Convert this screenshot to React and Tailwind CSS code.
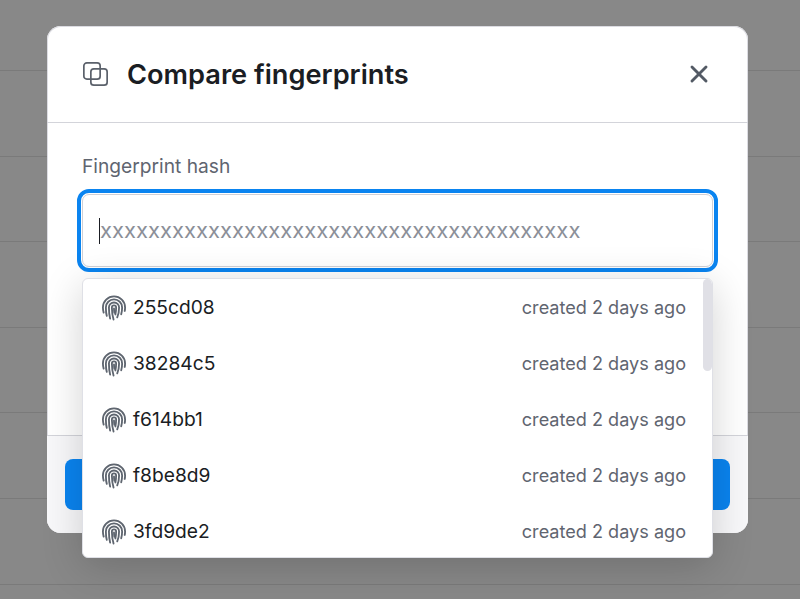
import React from 'react';
import { X } from 'lucide-react';

const FingerprintIcon = () => (
  <svg width="24" height="26" viewBox="0 0 26 28" fill="none" stroke="#5f6670" strokeWidth="2" strokeLinecap="round" className="shrink-0">
    <path d="M1.800 19C1.200 17 1 15 1 13.400 1 6.700 6.400 1.400 13 1.400s12 5.300 12 12c0 1.400-.1 2.600-.4 3.800" />
    <path d="M5.200 22.500C4.200 19.500 4.200 16 4.200 13.400 4.200 8.500 8.100 4.700 13 4.700s8.800 3.800 8.800 8.700c0 2.500-.3 5-1 7.500" />
    <path d="M8.800 25.500C7.800 21.500 7.500 17 7.500 13.400 7.500 10.400 10 8 13 8s5.500 2.400 5.500 5.400c0 3.600-.6 7.400-2 10.800" />
    <path d="M12.500 26.500c-1.200-4-1.800-9-1.800-13 0-1.300 1-2.300 2.300-2.300s2.300 1 2.300 2.300c0 2.500-.2 5-.8 7.500" />
    <path d="M13 14.500c0 1.500.1 3 .4 4.800" />
  </svg>
);

const keys = ['255cd08', '38284c5', 'f614bb1', 'f8be8d9', '3fd9de2'];

const CompareIcon = () => (
  <svg width="28" height="28" viewBox="0 0 28 28" fill="none" stroke="#5b616b" strokeWidth="1.7">
    <rect x="2.85" y="2.85" width="16.3" height="16.3" rx="3" />
    <rect x="9.85" y="8.85" width="16.3" height="16.3" rx="3" />
  </svg>
);

export default function App() {
  return (
    <div className="relative h-[599px] w-[800px] overflow-hidden bg-[#888888]" style={{ fontFamily: 'Inter, sans-serif' }}>
      {/* table rows behind the overlay */}
      <div className="h-[71px] border-b border-[#7a7a7a]" />
      {[0, 1, 2, 3, 4, 5].map((i) => (
        <div key={i} className="h-[85.6px] border-b border-[#7a7a7a]" />
      ))}

      <div className="absolute left-[47px] top-[26px] flex h-[507px] w-[701px] flex-col rounded-[14px] bg-white shadow-[inset_0_0_0_1px_#dcdce2]">
        <div className="flex h-[97px] items-center border-b border-[#d3d4da] pl-[34px] pr-[35px]">
          <CompareIcon />
          <h2 className="ml-[18px] mt-[2px] flex-1 text-[27.2px] font-semibold text-[#1a1d23]">Compare fingerprints</h2>
          <X size={28} strokeWidth={2.5} className="text-[#535a65]" />
        </div>
        <div className="flex-1 px-[30px] pt-[29px]">
          <label className="ml-[5px] block text-[19.2px] leading-[28px] text-[#5f6570]">Fingerprint hash</label>
          <div className="mt-[9px] rounded-xl border-4 border-[#0a84f0] p-px">
            <div className="flex h-[73px] items-center rounded-[7px] border border-[#cfd0d6] bg-white pl-[16px]">
              <div className="h-[26px] w-px bg-[#1a1d23]" />
              <span className="text-[22px] text-[#8b8f98]">xxxxxxxxxxxxxxxxxxxxxxxxxxxxxxxxxxxxxxxx</span>
            </div>
          </div>
        </div>
        <div className="h-[98px] rounded-b-[14px] border-t border-[#d3d4da] bg-[#f8f8fa] px-[18px] pt-[23px]">
          <div className="h-[51px] rounded-lg bg-[#0a84f0]" />
        </div>
      </div>

      {/* suggestions popover */}
      <div className="absolute left-[82px] top-[278px] h-[280px] w-[631px] overflow-hidden rounded-md border border-[#dfe0e6] bg-white shadow-[0_8px_40px_rgba(0,0,0,0.18)]">
        {keys.map((hash) => (
          <div key={hash} className="flex h-[56px] items-center pl-[19px] pr-[26px] pt-[1px]">
            <FingerprintIcon />
            <span className="ml-[7px] flex-1 text-[19.2px] text-[#1a1d23]">{hash}</span>
            <span className="text-[18.1px] text-[#5f6570]">created 2 days ago</span>
          </div>
        ))}
        <div className="absolute right-0 top-0 h-[92px] w-[9px] rounded-md bg-[#e0e0e6]" />
      </div>
    </div>
  );
}
